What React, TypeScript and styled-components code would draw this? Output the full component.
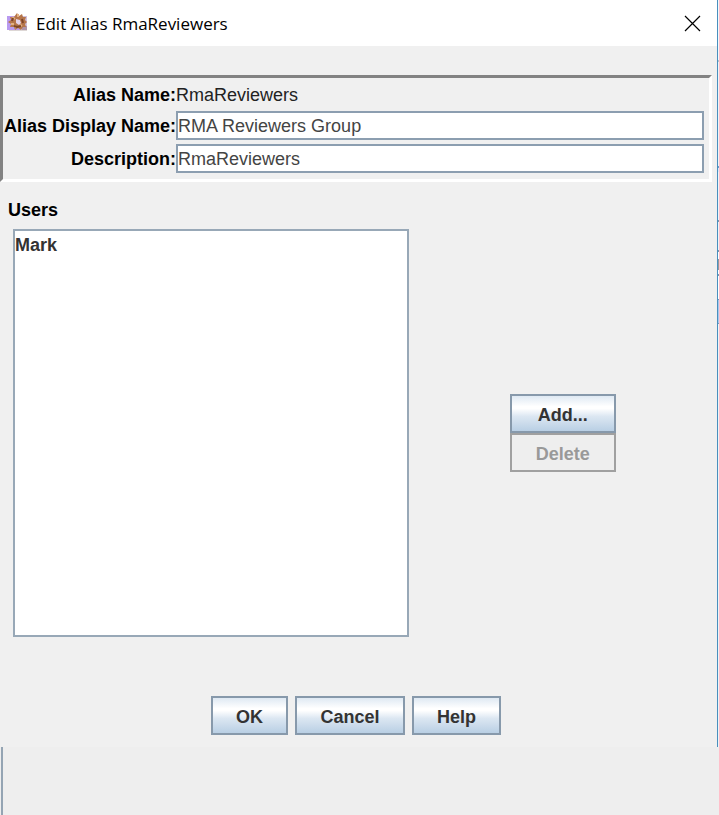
import React from "react";
import styled, { createGlobalStyle } from "styled-components";

const GlobalStyle = createGlobalStyle`
  * { box-sizing: border-box; }
  body {
    margin: 0;
    background: #eeeeee;
    font-family: "Liberation Sans", Arial, sans-serif;
    font-size: 18px;
    line-height: 20px;
    color: #000;
  }
  #root { min-height: 100vh; display: flex; }
`;

const Desktop = styled.div`
  flex: 1;
  min-height: 100vh;
  display: flex;
  flex-direction: column;
`;

const Foreground = styled.div`
  display: grid;
  grid-template-columns: minmax(0, 1fr) 1px;
`;

const Dialog = styled.section`
  background: #f0f0f0;
  border-right: 1px solid #4a8fbe;
`;

const WindowBehind = styled.div`
  background: linear-gradient(
    #f4f8fb 0 60px, #b8c4cc 60px 62px, #f0f3f6 62px 166px, #6b9ac8 166px 168px,
    #dbe8fa 168px 172px, #f0f3f8 172px 220px, #8098ac 220px 222px,
    #f0f3f6 222px 250px, #8098ac 250px 252px, #ffffff 252px 259px,
    #999999 259px 270px, #ffffff 270px 274px, #8098ac 274px 276px,
    #ffffff 276px 299px, #7898b8 299px 300px, #a9c9ee 300px 323px,
    #7898b8 323px 324px, #f0f3f6 324px
  );
`;

const PanelBehind = styled.div`
  flex: 1;
  margin-left: 1px;
  border-left: 2px solid #94a4b3;
`;

const TitleBar = styled.header`
  display: flex;
  align-items: center;
  height: 46px;
  padding: 0 16px 0 7px;
  background: #fff;
`;

const Title = styled.h1`
  flex: 1;
  margin: 0 0 0 7px;
  padding-top: 1px;
  font: 400 17px/24px "Open Sans", "Noto Sans", sans-serif;
`;

const CloseButton = styled.button`
  display: flex;
  padding: 0;
  border: 0;
  background: none;
`;

const Details = styled.div`
  display: grid;
  grid-template-columns: max-content minmax(0, 1fr);
  row-gap: 4px;
  margin: 29px 5px 0 0;
  padding: 6px 5px 6px 1px;
  border: 3px solid;
  border-color: #828282 #fff #fff #828282;
  align-items: center;
`;

const FieldLabel = styled.label`
  font-weight: 700;
  text-align: right;
`;

const NameLabel = styled.span`
  font-weight: 700;
  text-align: right;
  line-height: 23px;
`;

const NameValue = styled.output`
  line-height: 23px;
  color: #222;
`;

const Field = styled.input`
  width: 100%;
  height: 29px;
  padding: 1px 0 0;
  border: 2px solid #8c9eb0;
  border-radius: 0;
  background: #fff;
  color: #444;
  font: inherit;
  outline: 0;
`;

const Heading = styled.h2`
  margin: 18px 0 9px 8px;
  font-size: 18px;
  line-height: 20px;
`;

const Members = styled.div`
  display: grid;
  grid-template-columns: minmax(0, 57fr) minmax(0, 43fr);
  align-items: center;
`;

const UserList = styled.ul`
  min-height: 408px;
  margin: 0 0 0 13px;
  padding: 4px 0 0;
  list-style: none;
  background: #fff;
  border: 2px solid #98a8b7;
`;

const User = styled.li`
  font-weight: 700;
  color: #333;
`;

const Actions = styled.div`
  display: flex;
  flex-direction: column;
  align-items: center;
`;

const PushButton = styled.button<{ $width: number }>`
  width: ${(p) => p.$width}px;
  height: 39px;
  padding: 2px 0 0;
  border: 2px solid #8799ab;
  border-radius: 0;
  background: linear-gradient(#dfe9f3 0%, #ffffff 30%, #ffffff 36%, #dce7f2 58%, #b9cfe4 100%);
  color: #333;
  font: inherit;
  font-weight: 700;

  &:disabled {
    border-color: #a0a0a0;
    background: #eeeeee;
    color: #999;
  }
`;

const Footer = styled.footer`
  display: flex;
  justify-content: center;
  gap: 7px;
  padding: 59px 5px 12px 0;
`;

const AppIcon = () => (
  <svg width="22" height="20" viewBox="0 0 22 20" aria-hidden="true">
    <path d="M2 17h18v1H2z" fill="#ddd7d5" />
    <path d="M0 3h13v14H0z" fill="#b99af0" />
    <path d="M13 3h7v14h-7z" fill="#cfc0dc" />
    <path d="M15 13h5v4h-5z" fill="#ae94a8" />
    <path
      d="M10 0l2 3 3-2 1 3 3 0-1 3 2 2-2 2 1 3-3 0-2 3-3-2-3 2-1-3-4 0 1-3-3-2 3-2-1-3 4 0z"
      fill="#b5754a"
    />
    <path d="M5 4l3 2M4 11l3 0M11 1v3M15 13l-2-1M8 15l1-2" stroke="#e2b080" strokeWidth="2" />
    <path d="M7 13l3 1 4-1M15 6l1 4M5 8l1-3" fill="none" stroke="#7d4428" strokeWidth="2" />
    <path d="M9 6l4 1 1 3-2 2-3-2z" fill="#e4d2e9" />
  </svg>
);

export default function App() {
  return (
    <>
      <GlobalStyle />
      <Desktop>
        <Foreground>
          <Dialog aria-labelledby="dialog-title">
            <TitleBar>
              <AppIcon />
              <Title id="dialog-title">Edit Alias RmaReviewers</Title>
              <CloseButton type="button" aria-label="Close">
                <svg width="17" height="17" viewBox="0 0 17 17">
                  <path d="M1 1l15 15M16 1L1 16" stroke="#000" strokeWidth="1.2" />
                </svg>
              </CloseButton>
            </TitleBar>
            <Details>
              <NameLabel>Alias Name:</NameLabel>
              <NameValue>RmaReviewers</NameValue>
              <FieldLabel htmlFor="display-name">Alias Display Name:</FieldLabel>
              <Field id="display-name" defaultValue="RMA Reviewers Group" />
              <FieldLabel htmlFor="description">Description:</FieldLabel>
              <Field id="description" defaultValue="RmaReviewers" />
            </Details>
            <Heading id="users-heading">Users</Heading>
            <Members>
              <UserList aria-labelledby="users-heading">
                <User>Mark</User>
              </UserList>
              <Actions>
                <PushButton type="button" $width={106}>Add...</PushButton>
                <PushButton type="button" $width={106} disabled>Delete</PushButton>
              </Actions>
            </Members>
            <Footer>
              <PushButton type="button" $width={77}>OK</PushButton>
              <PushButton type="button" $width={110}>Cancel</PushButton>
              <PushButton type="button" $width={89}>Help</PushButton>
            </Footer>
          </Dialog>
          <WindowBehind />
        </Foreground>
        <PanelBehind />
      </Desktop>
    </>
  );
}
